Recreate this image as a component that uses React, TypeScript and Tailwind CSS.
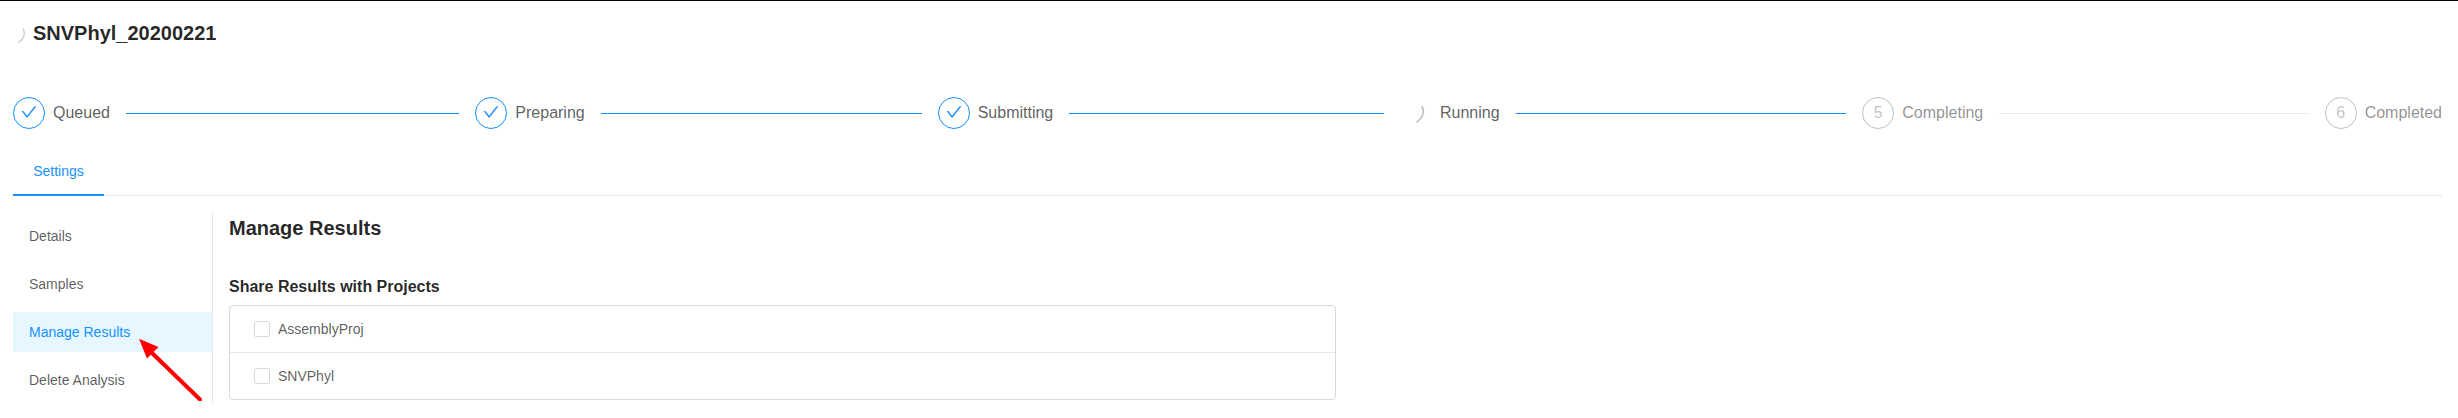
type StepState = "done" | "active" | "wait";

const steps: { label: string; state: StepState }[] = [
  { label: "Queued", state: "done" },
  { label: "Preparing", state: "done" },
  { label: "Submitting", state: "done" },
  { label: "Running", state: "active" },
  { label: "Completing", state: "wait" },
  { label: "Completed", state: "wait" },
];

const menu = ["Details", "Samples", "Manage Results", "Delete Analysis"];
const projects = ["AssemblyProj", "SNVPhyl"];

function Check() {
  return (
    <svg viewBox="64 64 896 896" className="size-4 fill-[#1890ff]">
      <path d="M912 190h-69.9c-9.8 0-19.1 4.5-25.1 12.2L404.7 724.5 207 474a32 32 0 0 0-25.1-12.2H112c-6.7 0-10.4 7.7-6.3 12.9l273.9 347c12.8 16.2 37.4 16.2 50.3 0l488.4-618.9c4.1-5.1.4-12.8-6.3-12.8z" />
    </svg>
  );
}

function StepIcon({ state, index }: { state: StepState; index: number }) {
  if (state === "active") {
    return (
      <svg viewBox="0 0 32 32" className="mr-2 size-8 shrink-0" fill="none">
        <path d="M22.2 9.7C24.8 15.2 22.6 21.4 17 25" stroke="#c4c4c4" strokeWidth="1.8" strokeLinecap="round" />
      </svg>
    );
  }
  if (state === "done") {
    return (
      <span className="mr-2 flex size-8 shrink-0 items-center justify-center rounded-full border border-[#1890ff] pb-0.5">
        <Check />
      </span>
    );
  }
  return (
    <span className="mr-2 flex size-8 shrink-0 items-center justify-center rounded-full border border-black/25 text-base text-black/25">
      {index}
    </span>
  );
}

function Step({ label, state, index }: { label: string; state: StepState; index: number }) {
  const last = index === steps.length;
  return (
    <li className={last ? "flex items-center" : "mr-4 flex min-w-0 flex-1 items-center"}>
      <StepIcon state={state} index={index} />
      <span className={state === "wait" ? "text-base leading-8 text-black/45" : "text-base leading-8 text-black/65"}>
        {label}
      </span>
      {!last && (
        <span className={state === "wait" ? "mt-px ml-4 h-px flex-1 bg-[#e8e8e8]" : "mt-px ml-4 h-px flex-1 bg-[#1890ff]"} />
      )}
    </li>
  );
}

export default function App() {
  return (
    <div className="relative h-[418px] w-full overflow-hidden border-t border-black bg-white pr-4 pl-[13px] font-['Liberation_Sans',Arial,sans-serif] text-sm text-black/65">
      <header className="flex h-16 items-center">
        <svg viewBox="0 0 20 32" className="h-8 w-5 shrink-0" fill="none">
          <path d="M10.4 12C12.6 16.8 10.6 22.1 6 25" stroke="#d0d0d0" strokeWidth="1.5" strokeLinecap="round" />
        </svg>
        <h1 className="text-xl leading-7 font-bold text-black/85">SNVPhyl_20200221</h1>
      </header>

      <ol className="mt-8 flex h-8">
        {steps.map((s, i) => (
          <Step key={s.label} {...s} index={i + 1} />
        ))}
      </ol>

      <nav className="mt-[21px] flex h-[46px] border-b border-[#e8e8e8]">
        <button className="h-[46px] w-[91px] border-b-2 border-[#1890ff] pb-0.5 text-center text-[#1890ff]">Settings</button>
      </nav>

      <div className="mt-4 flex">
        <aside className="flex h-48 w-[200px] shrink-0 flex-col gap-2 border-r border-[#e8e8e8] pt-1">
          {menu.map((m) => (
            <a
              key={m}
              className={
                m === "Manage Results"
                  ? "h-10 shrink-0 bg-[#e6f7ff] pl-4 leading-10 text-[#1890ff]"
                  : "h-10 shrink-0 pl-4 leading-10"
              }
            >
              {m}
            </a>
          ))}
        </aside>
        <main className="ml-4 w-[1107px]">
          <h2 className="mt-0.5 text-xl leading-7 font-bold text-black/85">Manage Results</h2>
          <h3 className="mt-[33px] text-base leading-6 font-bold text-black/85">Share Results with Projects</h3>
          <ul className="mt-1.5 divide-y divide-[#e8e8e8] rounded border border-[#d9d9d9]">
            {projects.map((p) => (
              <li key={p} className="box-content flex h-[46px] items-center gap-2 pl-6">
                <span className="size-4 rounded-xs border border-[#d9d9d9] bg-white" />
                {p}
              </li>
            ))}
          </ul>
        </main>
      </div>

      <svg viewBox="0 0 64 64" className="absolute top-[336px] left-[138px] size-16">
        <path d="M13 15L62 62.5" stroke="#ff0000" strokeWidth="4" strokeLinecap="round" />
        <path d="M1 1.8L20.5 10L9 21.5Z" fill="#ff0000" />
      </svg>
    </div>
  );
}
